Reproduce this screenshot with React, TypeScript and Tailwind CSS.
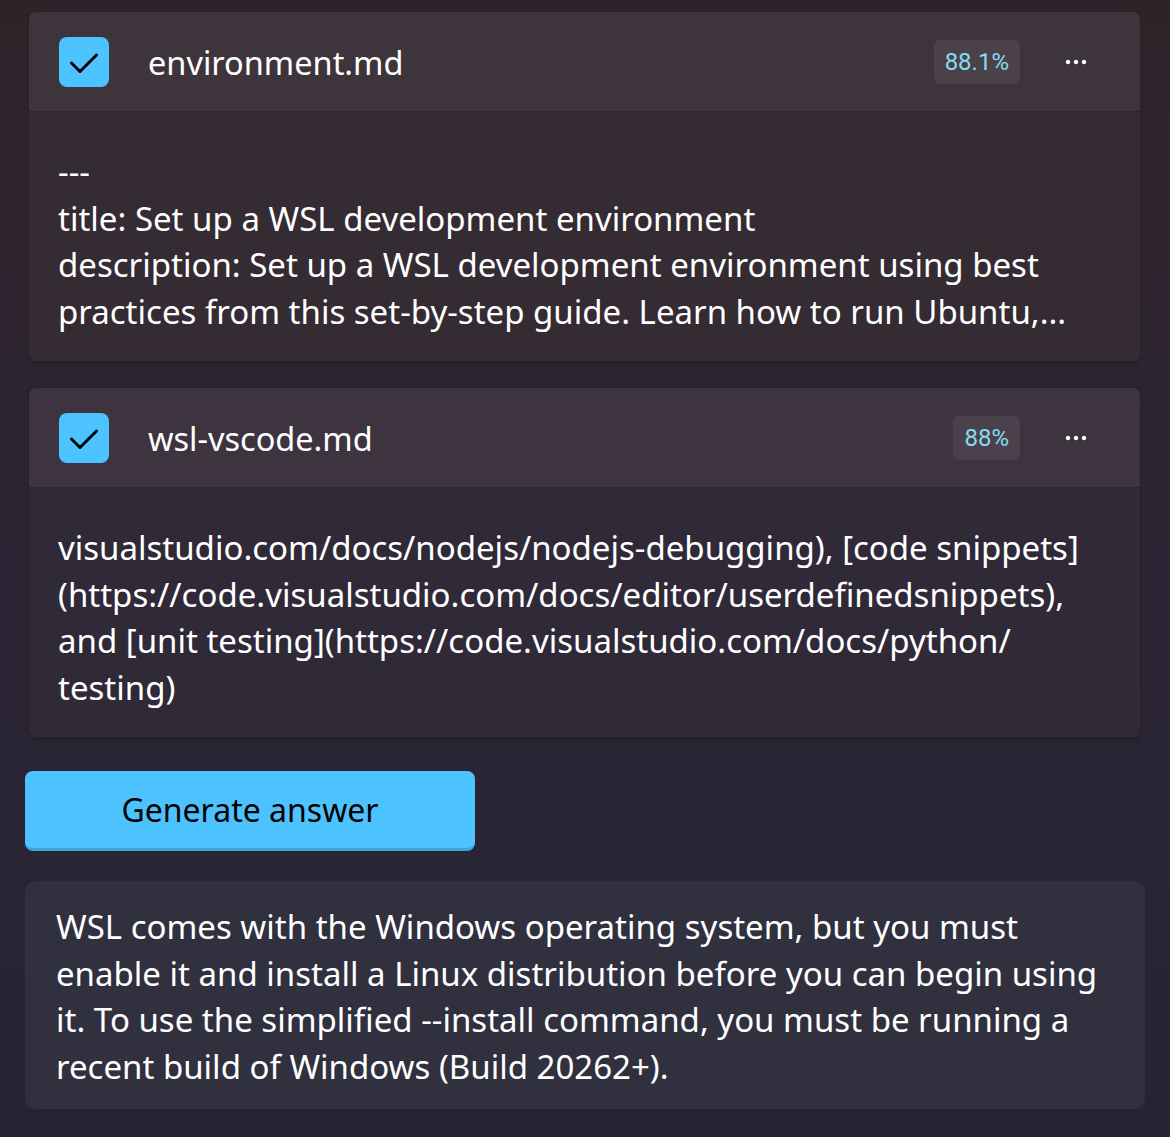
const font = { fontFamily: '"Noto Sans", "Open Sans", sans-serif' };

function Check() {
  return (
    <div className="flex h-[50px] w-[50px] shrink-0 items-center justify-center rounded-[8px] bg-[#4cc2ff]">
      <svg width="50" height="50" viewBox="0 0 50 50">
        <path d="M12.5 26 L21 34.5 L37.5 18" fill="none" stroke="#000" strokeWidth="3" strokeLinecap="round" strokeLinejoin="round" />
      </svg>
    </div>
  );
}

function Dots() {
  return (
    <svg width="24" height="8" viewBox="0 0 24 8" className="shrink-0">
      <circle cx="4" cy="4" r="2.2" fill="#fff" />
      <circle cx="12" cy="4" r="2.2" fill="#fff" />
      <circle cx="20" cy="4" r="2.2" fill="#fff" />
    </svg>
  );
}

interface DocProps {
  name: string;
  score: string;
  lines: string[];
  headerBg: string;
  bodyBg: string;
  badgeBg: string;
}

function DocCard({ name, score, lines, headerBg, bodyBg, badgeBg }: DocProps) {
  return (
    <div className="mx-[28px] w-[1113px] overflow-hidden rounded-[8px] border border-[#2a2228] shadow-[0_1px_2px_rgba(0,0,0,0.3)]">
      <div className={`flex h-[100px] items-center border-b border-[#2d262c] pl-[30px] pr-[52px] ${headerBg}`}>
        <Check />
        <span className="ml-[39px] pt-[3px] text-[32.5px] text-white">{name}</span>
        <div className="flex-1" />
        <span className={`rounded-[6px] px-[11px] py-[4px] text-[24px] text-[#86dbf2] ${badgeBg}`} style={{ fontFamily: "Roboto, sans-serif" }}>
          {score}
        </span>
        <div className="ml-[44px]">
          <Dots />
        </div>
      </div>
      <div className={`h-[249px] px-[29px] pt-[37px] ${bodyBg}`}>
        {lines.map((l, i) => (
          <div key={i} className="whitespace-nowrap text-[33px] leading-[46.5px] text-white">
            {l}
          </div>
        ))}
      </div>
    </div>
  );
}

export default function App() {
  return (
    <div className="min-h-[1137px] w-[1170px] bg-gradient-to-b from-[#2f2329] via-[#2c2535] to-[#252433] pt-[11px]" style={font}>
      <DocCard
        name="environment.md"
        score="88.1%"
        headerBg="bg-[#3e353c]"
        bodyBg="bg-[#352b33]"
        badgeBg="bg-[#4a4248]"
        lines={[
          "---",
          "title: Set up a WSL development environment",
          "description: Set up a WSL development environment using best",
          "practices from this set-by-step guide. Learn how to run Ubuntu,...",
        ]}
      />
      <div className="h-[25px]" />
      <DocCard
        name="wsl-vscode.md"
        score="88%"
        headerBg="bg-[#3d3440]"
        bodyBg="bg-[#302a38]"
        badgeBg="bg-[#4a414d]"
        lines={[
          "visualstudio.com/docs/nodejs/nodejs-debugging), [code snippets]",
          "(https://code.visualstudio.com/docs/editor/userdefinedsnippets),",
          "and [unit testing](https://code.visualstudio.com/docs/python/",
          "testing)",
        ]}
      />
      <div className="ml-[25px] mt-[33px]">
        <button className="h-[80px] w-[450px] rounded-[8px] border-b-[3px] border-[#3aa6dc] bg-[#4cc2ff] text-[32px] text-black">
          Generate answer
        </button>
      </div>
      <div className="mx-[25px] mt-[30px] h-[228px] rounded-[10px] bg-[#31303f] px-[31px] pt-[23px]">
        {[
          "WSL comes with the Windows operating system, but you must",
          "enable it and install a Linux distribution before you can begin using",
          "it. To use the simplified --install command, you must be running a",
          "recent build of Windows (Build 20262+).",
        ].map((l, i) => (
          <div key={i} className="whitespace-nowrap text-[33px] leading-[46.5px] text-white">
            {l}
          </div>
        ))}
      </div>
    </div>
  );
}
